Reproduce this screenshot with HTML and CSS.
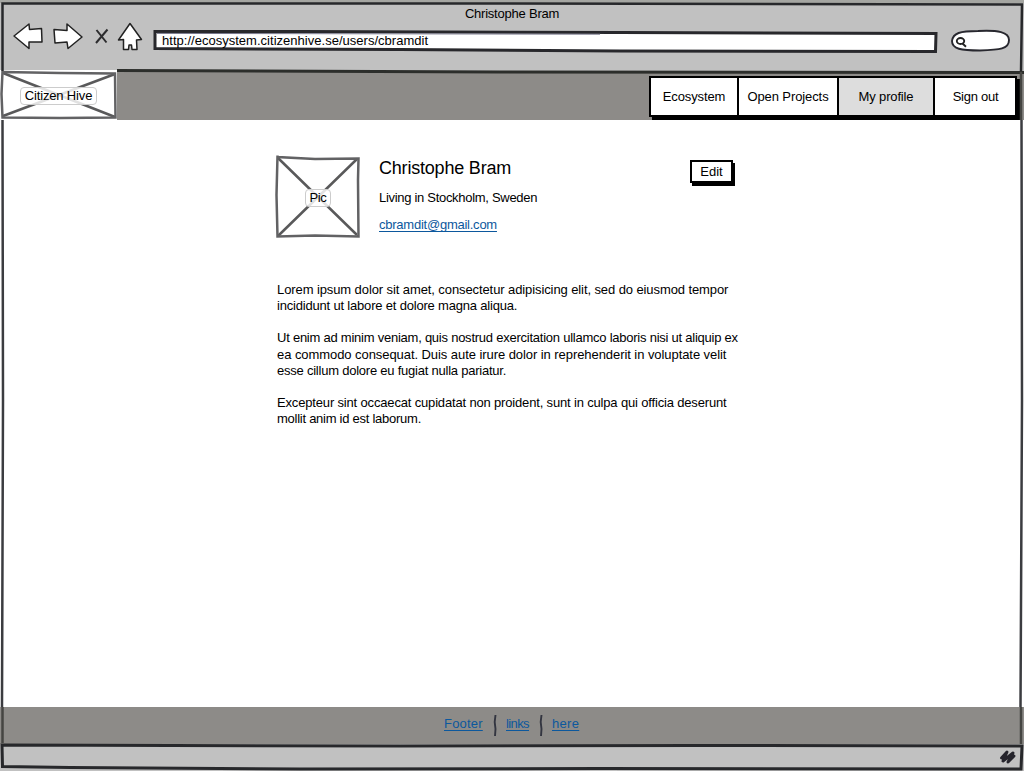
FILE: index.html
```html
<!DOCTYPE html>
<html lang="en">
<head>
<meta charset="utf-8">
<title>Christophe Bram</title>
<link rel="stylesheet" href="styles.css">
</head>
<body>
<div class="window">
  <div class="chrome">
    <div class="window-title"><span class="t-title">Christophe Bram</span></div>
    <div class="toolbar">
      <svg class="tools" width="144" height="36" viewBox="0 20 144 36">
        <g fill="#fff" stroke="#222" stroke-width="1.5" stroke-linejoin="round">
          <path d="M14 36L29 24L29.500 29.500L41.500 28.500L42 42L29 42L29 48.500Z"/>
          <path d="M82 37L67 24L67 30.500L54 29.500L55 43L67 42L68 48.500Z"/>
          <path d="M130 23.500L141.500 39.500L136.500 40L137 49.500L132 49.500L131.500 45L129 45L128.500 49.500L123.500 49.500L123.500 39.500L118.500 40Z"/>
        </g>
        <path d="M96.500 30L106.500 42.500M107.500 29.500L96 43" fill="none" stroke="#2c2c2e" stroke-width="2"/>
      </svg>
      <div class="address">
        <svg class="address-frame" width="786" height="24" viewBox="152 29 786 24">
          <path d="M155 31.500L300 31.500L620 32.500L936 33.500L935.500 51.500L620 51L400 49.500L155 48.500Z" fill="#fff" stroke="#28282c" stroke-width="3"/>
          <path d="M157 33.400L600 34.200" stroke="#77778a" stroke-width="1"/>
        </svg>
        <span class="t-url">http://ecosystem.citizenhive.se/users/cbramdit</span>
      </div>
      <svg class="search" width="62" height="24" viewBox="950 29 62 24">
        <path d="M952 41C953 33 960 31 978 31C998 30 1009 32 1009 40C1009 49 1000 50 980 50.500C961 50.500 952 49 952 41Z" fill="#fff" stroke="#28282f" stroke-width="1.900"/>
        <ellipse cx="960.500" cy="41" rx="3.700" ry="3" fill="#fff" stroke="#222" stroke-width="1.900"/>
        <path d="M962.500 43.500L966 46.800" stroke="#222" stroke-width="1.900"/>
      </svg>
    </div>
  </div>
  <header class="site-header">
    <div class="logo">
      <svg class="sketch" width="117" height="50" viewBox="0 70 117 50">
        <path d="M0 70H117V120H0Z" fill="#fff"/>
        <path d="M3 73L115 117M115 74L3 116" stroke="#59595a" stroke-width="2.500"/>
        <path d="M2.500 72L60 73L115 73.500L115.500 117.500L60 118L2.500 117.500L1.500 94Z" fill="none" stroke="#626264" stroke-width="2.500"/>
      </svg>
      <span class="tag"><span class="t-logo">Citizen Hive</span></span>
    </div>
    <nav class="tabs">
      <a class="tab eco"><span class="t-eco">Ecosystem</span></a>
      <a class="tab projects"><span class="t-projects">Open Projects</span></a>
      <a class="tab profile"><span class="t-profile">My profile</span></a>
      <a class="tab signout"><span class="t-signout">Sign out</span></a>
    </nav>
  </header>
  <main class="content">
    <section class="person">
      <div class="photo">
        <svg class="sketch" width="86" height="86" viewBox="275 154 86 86">
          <path d="M278 158L357 235M357 159L278 236" stroke="#59595a" stroke-width="2.500"/>
          <path d="M277.500 155.500V157L315 159L358.500 158.500L358 180L358.500 236.500L315 235.500L277.500 236.500L276.500 195L277.500 156" fill="none" stroke="#626264" stroke-width="2.500"/>
        </svg>
        <span class="tag small"><span class="t-pic">Pic</span></span>
      </div>
      <div class="details">
        <h1><span class="t-name">Christophe Bram</span></h1>
        <p class="place"><span class="t-place">Living in Stockholm, Sweden</span></p>
        <a class="link mail"><span class="t-mail">cbramdit@gmail.com</span></a>
      </div>
      <button class="edit"><span class="t-edit">Edit</span></button>
    </section>
    <section class="bio">
      <p><span class="l1">Lorem ipsum dolor sit amet, consectetur adipisicing elit, sed do eiusmod tempor</span><br><span class="l2">incididunt ut labore et dolore magna aliqua.</span></p>
      <p><span class="l3">Ut enim ad minim veniam, quis nostrud exercitation ullamco laboris nisi ut aliquip ex</span><br><span class="l4">ea commodo consequat. Duis aute irure dolor in reprehenderit in voluptate velit</span><br><span class="l5">esse cillum dolore eu fugiat nulla pariatur.</span></p>
      <p><span class="l6">Excepteur sint occaecat cupidatat non proident, sunt in culpa qui officia deserunt</span><br><span class="l7">mollit anim id est laborum.</span></p>
    </section>
  </main>
  <footer class="site-footer">
    <div class="cell f1"><a class="link">Footer</a></div>
    <svg width="4" height="23" viewBox="0 0 4 23"><path d="M2.500 1L1.700 8L2.500 15L2 22" fill="none" stroke="#333540" stroke-width="1.900"/></svg>
    <div class="cell f2"><a class="link">links</a></div>
    <svg width="4" height="23" viewBox="0 0 4 23"><path d="M2.500 1L1.700 8L2.500 15L2 22" fill="none" stroke="#333540" stroke-width="1.900"/></svg>
    <div class="cell f3"><a class="link">here</a></div>
  </footer>
  <div class="status">
    <svg width="18" height="18" viewBox="0 0 18 18"><path d="M2.500 10L8 4L4 13L14 5L9 14L15 8" fill="none" stroke="#25242c" stroke-width="3" stroke-linejoin="round" stroke-linecap="round"/></svg>
  </div>
  <svg class="frame" width="1024" height="771" viewBox="0 0 1024 771">
    <g fill="none" stroke="#27282b" stroke-width="2.500">
      <path d="M2.500 71V3.500L500 3.500L1022 4.500L1021 72"/>
      <path d="M117 70.500L500 72L1024 72.500" stroke-width="3" stroke="#2c2e2b"/>
      <path d="M2.500 120L3 400L2 707M1021.500 120L1022 400L1020.500 707" stroke="#3b3c40"/>
      <path d="M2.500 707V743M1021 72V120M1021 707V744" stroke="#454542"/>
      <path d="M2 745L400 746L700 745.500L1022 746L1021 769L600 768.500L300 769L70 767.500L2.500 766.500Z" stroke-width="3"/>
    </g>
  </svg>
</div>
</body>
</html>
```
FILE: styles.css
```css
* { box-sizing: border-box; }
body { margin: 0; background: #fff; color: #000; font: 13px/16px "Liberation Sans", Arial, sans-serif; }
p, h1 { margin: 0; }
.window { position: relative; width: 1024px; height: 771px; display: flex; flex-direction: column; overflow: hidden; background: #fff; }
.frame { position: absolute; inset: 0; pointer-events: none; }
.chrome { height: 72px; flex: none; background: #c1c1c1; border-top: 3px solid #a5a6a2; }
.window-title { height: 17px; padding-top: 3px; text-align: center; }
.toolbar { display: flex; height: 36px; }
.tools { flex: none; margin-right: 8px; }
.address { position: relative; width: 786px; height: 24px; margin-top: 9px; padding: 4px 10px; }
.address-frame { position: absolute; left: 0; top: 0; }
.address span { position: relative; }
.search { margin: 9px 0 0 12px; }
.site-header { height: 48px; flex: none; display: flex; justify-content: space-between; background: #8d8b88; }
.logo { position: relative; width: 117px; height: 50px; margin-top: -2px; display: flex; align-items: center; justify-content: center; }
.sketch { position: absolute; left: 0; top: 0; }
.tag { position: relative; width: 77px; height: 18px; margin-top: 1px; border: 1px solid #ccc; border-radius: 4px; background: rgba(255,255,255,.82); text-align: center; line-height: 16px; }
.tag.small { width: 26px; margin-top: 2px; }
.tabs { display: flex; width: 368px; height: 41px; margin: 4px 7px 0 0; border: 2px solid #000; background: #fff; box-shadow: 3px 3px #000; }
.tab { display: flex; align-items: center; justify-content: center; border-right: 2px solid #000; padding-top: 1px; }
.eco { width: 88px; }
.projects { width: 100px; }
.profile { width: 96px; background: #ddd; }
.signout { flex: 1; border-right: 0; padding-left: 1px; }
.content { flex: 1; padding: 34px 0 0 275px; }
.person { display: flex; width: 460px; height: 86px; }
.photo { position: relative; width: 86px; height: 86px; display: flex; align-items: center; justify-content: center; }
.details { width: 311px; padding: 3px 0 0 18px; }
h1 { font-size: 18px; line-height: 22px; font-weight: 400; }
.place { margin-top: 11px; }
.mail { display: block; margin-top: 11px; }
.link { color: #0c589d; text-decoration: underline; text-decoration-skip-ink: none; text-underline-offset: 2px; }
.edit { width: 43px; height: 23px; margin: 6px 0 0 18px; padding: 0; border: 2px solid #000; background: #fff; box-shadow: 2px 3px #000; color: #000; font: inherit; white-space: nowrap; }
.bio { padding: 42px 0 0 2px; white-space: nowrap; line-height: 16.2px; }
.bio p + p { margin-top: 16px; }
.site-footer { height: 37px; flex: none; display: flex; align-items: flex-start; padding: 7px 0 0 444px; background: #8d8b88; }
.cell { margin-top: 2px; white-space: nowrap; }
.f1 { width: 49px; letter-spacing: .2px; }
.f2 { width: 33px; margin-left: 9px; letter-spacing: -.6px; }
.f3 { margin-left: 9px; letter-spacing: .3px; }
.status { height: 27px; flex: none; display: flex; justify-content: flex-end; padding: 4px 7px 0 0; background: #c1c1c1; }

/* tracking */
.t-title { letter-spacing: -.22px; }
.t-url { letter-spacing: .02px; }
.t-logo { letter-spacing: -.15px; }
.t-eco, .t-projects { letter-spacing: -.1px; }
.t-profile { letter-spacing: -.15px; }
.t-signout { letter-spacing: -.25px; }
.t-name { letter-spacing: -.2px; }
.t-place { letter-spacing: -.3px; }
.t-mail { letter-spacing: -.24px; }
.t-pic { letter-spacing: -.3px; }
.l1 { letter-spacing: -.095px; }
.l2 { letter-spacing: -.19px; }
.l3 { letter-spacing: -.24px; }
.l4 { letter-spacing: -.065px; }
.l5 { letter-spacing: -.23px; }
.l6 { letter-spacing: -.165px; }
.l7 { letter-spacing: -.26px; }
```
